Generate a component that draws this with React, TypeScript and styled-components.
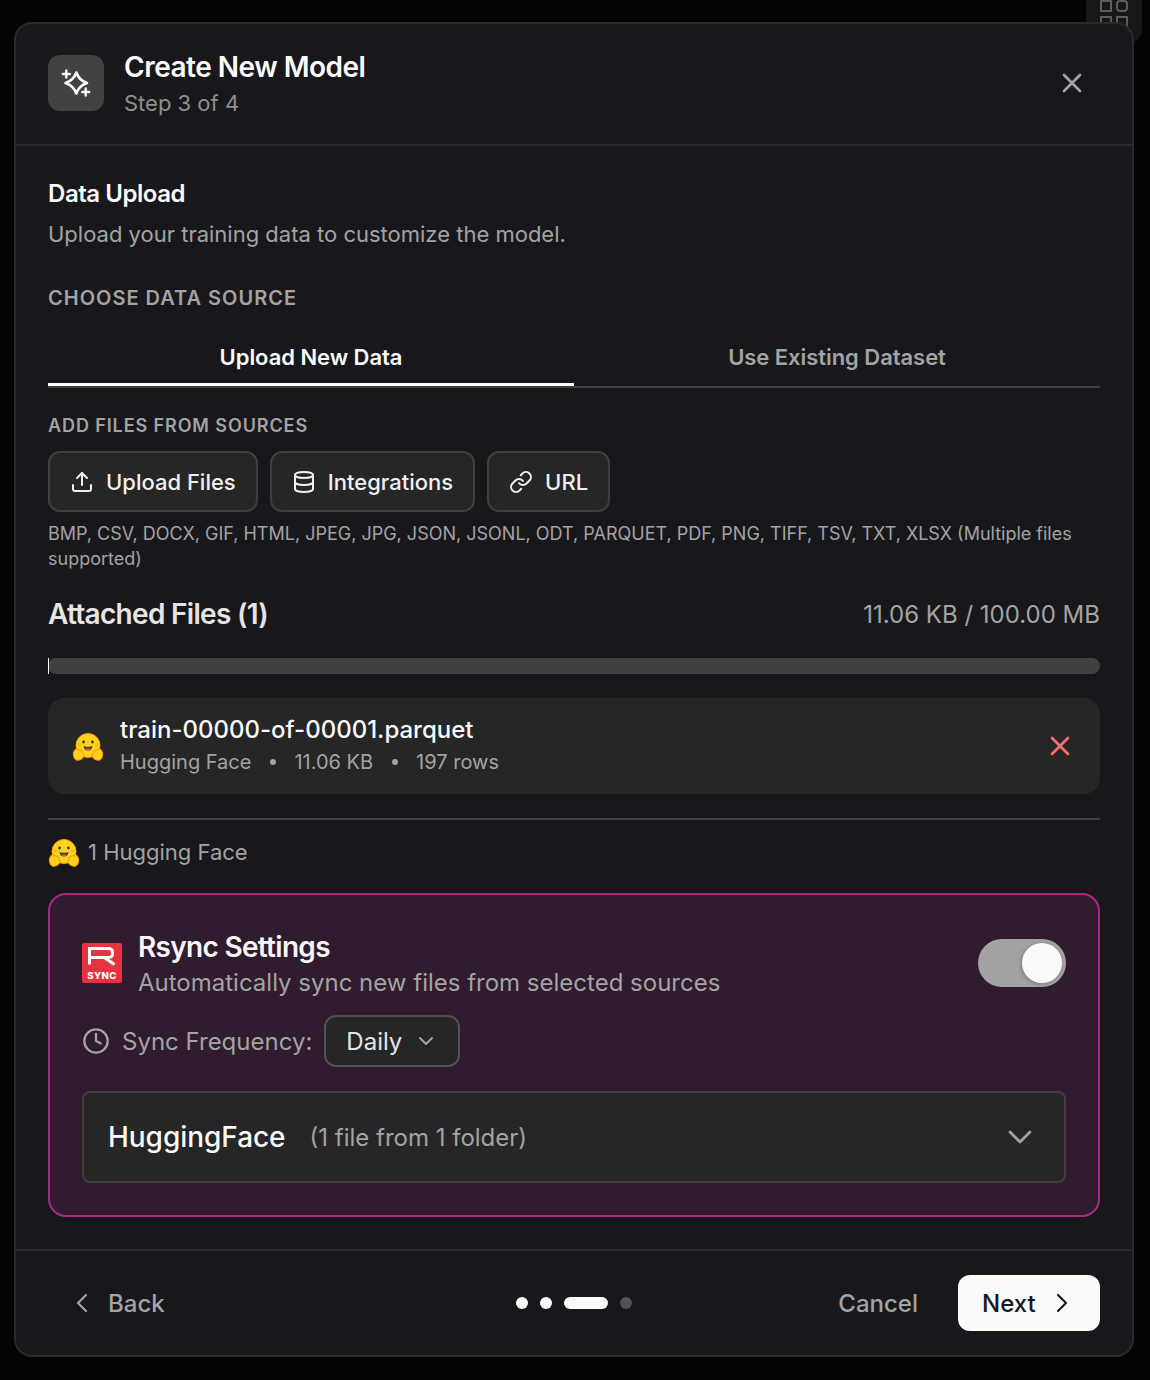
import React from "react";
import styled, { createGlobalStyle } from "styled-components";
import { X, Upload, Database, Link, Clock, ChevronDown, ChevronLeft, ChevronRight } from "lucide-react";

const GlobalStyle = createGlobalStyle`
  html, body {
    margin: 0;
    padding: 0;
    background: #040404;
    font-family: Inter, "Liberation Sans", sans-serif;
  }
`;

const Page = styled.div`
  position: relative;
  width: 1150px;
  height: 1380px;
  padding: 22px 16px 0 14px;
  box-sizing: border-box;
  overflow: hidden;
`;

const BackdropTile = styled.div`
  position: absolute;
  top: -14px;
  right: 8px;
  width: 56px;
  height: 56px;
  border-radius: 12px;
  background: #171717;
  color: #5c5c5c;
  display: flex;
  align-items: center;
  justify-content: center;
`;

const Modal = styled.div`
  position: relative;
  width: 1120px;
  height: 1335px;
  box-sizing: border-box;
  display: flex;
  flex-direction: column;
  background: #18181c;
  border: 2px solid #2a2a2c;
  border-radius: 18px;
`;

const Header = styled.header`
  height: 122px;
  box-sizing: border-box;
  flex-shrink: 0;
  display: flex;
  align-items: center;
  gap: 20px;
  padding: 0 32px 2px;
  border-bottom: 2px solid #2a2a2c;
`;

const HeaderIcon = styled.div`
  width: 56px;
  height: 56px;
  border-radius: 12px;
  background: #424242;
  display: flex;
  align-items: center;
  justify-content: center;
  color: #fafafa;
`;

const HeaderText = styled.div`
  flex: 1;
  display: flex;
  flex-direction: column;
  gap: 2px;
  margin-top: 2px;
`;

const Title = styled.div`
  font-size: 28px;
  line-height: 36px;
  font-weight: 600;
  letter-spacing: -0.5px;
  color: #fafafa;
`;

const Subtitle = styled.div`
  font-size: 22px;
  line-height: 32px;
  color: #8f8f8f;
`;

const CloseButton = styled.div`
  color: #a3a3a3;
  display: flex;
  margin-right: 12px;
`;

const Body = styled.main`
  flex: 1;
  padding: 32px 32px 0;
  display: flex;
  flex-direction: column;
`;

const SectionTitle = styled.div`
  font-size: 24px;
  line-height: 32px;
  font-weight: 600;
  letter-spacing: -0.45px;
  color: #fafafa;
`;

const SectionText = styled.div`
  margin-top: 8px;
  font-size: 22px;
  line-height: 32px;
  color: #a3a3a3;
`;

const OverLabel = styled.div<{ $size: number; $top: number; $spacing: number }>`
  margin-top: ${(p) => p.$top}px;
  font-size: ${(p) => p.$size}px;
  line-height: 26px;
  font-weight: 600;
  letter-spacing: ${(p) => p.$spacing}px;
  color: #a3a3a3;
`;

const Tabs = styled.div`
  display: flex;
  margin-top: 21px;
  border-bottom: 2px solid #404040;
`;

const Tab = styled.div<{ $active?: boolean }>`
  flex: 1;
  height: 54px;
  box-sizing: border-box;
  display: flex;
  align-items: center;
  justify-content: center;
  padding-bottom: 1px;
  border-bottom: 3px solid ${(p) => (p.$active ? "#fafafa" : "transparent")};
  font-size: 22px;
  font-weight: 600;
  letter-spacing: -0.05px;
  color: ${(p) => (p.$active ? "#fafafa" : "#a3a3a3")};
`;

const SourceRow = styled.div`
  display: flex;
  gap: 12px;
  margin-top: 12px;
`;

const SourceButton = styled.div`
  height: 61px;
  box-sizing: border-box;
  display: flex;
  align-items: center;
  gap: 12px;
  padding: 0 20px;
  border: 2px solid #404040;
  border-radius: 12px;
  background: #262626;
  font-size: 22px;
  font-weight: 500;
  color: #f0f0f0;
`;

const HelpText = styled.div`
  margin-top: 9px;
  font-size: 18px;
  line-height: 25px;
  color: #a3a3a3;
`;

const AttachedRow = styled.div`
  margin-top: 25px;
  display: flex;
  align-items: center;
  justify-content: space-between;
`;

const AttachedTitle = styled.div`
  font-size: 28px;
  line-height: 36px;
  font-weight: 600;
  letter-spacing: -0.7px;
  color: #e5e5e5;
`;

const AttachedSize = styled.div`
  font-size: 24px;
  color: #a3a3a3;
`;

const Progress = styled.div`
  margin-top: 26px;
  height: 16px;
  border-radius: 8px;
  background: #404040;
`;

const ProgressFill = styled.div`
  height: 100%;
  background: #fafafa;
`;

const FileCard = styled.div`
  margin-top: 24px;
  height: 96px;
  box-sizing: border-box;
  display: flex;
  align-items: center;
  gap: 16px;
  padding: 0 24px;
  border-radius: 16px;
  background: #262626;
`;

const FileInfo = styled.div`
  flex: 1;
  display: flex;
  flex-direction: column;
`;

const FileName = styled.div`
  font-size: 24px;
  line-height: 32px;
  font-weight: 500;
  color: #fafafa;
`;

const FileMeta = styled.div`
  display: flex;
  align-items: center;
  gap: 18.5px;
  font-size: 20px;
  line-height: 32px;
  color: #a3a3a3;
`;

const MetaDot = styled.span`
  width: 6px;
  height: 6px;
  border-radius: 50%;
  background: #a3a3a3;
`;

const RemoveButton = styled.div`
  display: flex;
  color: #f87171;
`;

const Divider = styled.div`
  margin-top: 24px;
  height: 2px;
  background: #404040;
`;

const SourceCount = styled.div`
  margin-top: 16px;
  display: flex;
  align-items: center;
  gap: 8px;
  font-size: 22px;
  line-height: 32px;
  color: #a3a3a3;
`;

const RsyncPanel = styled.section`
  margin-top: 25px;
  height: 324px;
  box-sizing: border-box;
  padding: 44px 32px 0;
  border: 2px solid #a62a82;
  border-radius: 18px;
  background: #301b2f;
  display: flex;
  flex-direction: column;
`;

const RsyncHead = styled.div`
  display: flex;
  align-items: center;
  gap: 16px;
  height: 48px;
`;

const RsyncText = styled.div`
  flex: 1;
  display: flex;
  flex-direction: column;
  padding-top: 3px;
`;

const RsyncTitle = styled.div`
  font-size: 28px;
  line-height: 36px;
  font-weight: 600;
  letter-spacing: -0.7px;
  color: #f5f5f5;
`;

const RsyncSub = styled.div`
  font-size: 24px;
  line-height: 35px;
  color: #a3a3a3;
`;

const Toggle = styled.div`
  width: 88px;
  height: 48px;
  box-sizing: border-box;
  padding: 4px;
  border-radius: 24px;
  background: #a3a3a3;
  display: flex;
  justify-content: flex-end;
`;

const ToggleKnob = styled.div`
  width: 40px;
  height: 40px;
  border-radius: 50%;
  background: #fafafa;
  box-shadow: -1px 1px 4px rgba(0, 0, 0, 0.25);
`;

const FrequencyRow = styled.div`
  margin-top: 28px;
  display: flex;
  align-items: center;
  gap: 12px;
  font-size: 24px;
  color: #a3a3a3;
`;

const FrequencySelect = styled.div`
  height: 52px;
  box-sizing: border-box;
  display: flex;
  align-items: center;
  gap: 12px;
  padding: 0 20px;
  border: 2px solid #525252;
  border-radius: 12px;
  background: #262626;
  color: #e5e5e5;
`;

const FrequencyChevron = styled(ChevronDown)`
  color: #a3a3a3;
`;

const FolderRow = styled.div`
  margin-top: 24px;
  height: 92px;
  box-sizing: border-box;
  display: flex;
  align-items: center;
  padding: 0 24px;
  border: 2px solid #404040;
  border-radius: 8px;
  background: #262626;
`;

const FolderName = styled.div`
  font-size: 28px;
  font-weight: 500;
  letter-spacing: -0.05px;
  color: #fafafa;
`;

const FolderCount = styled.div`
  flex: 1;
  margin-left: 24px;
  font-size: 24px;
  color: #a3a3a3;
`;

const Footer = styled.footer`
  height: 106px;
  flex-shrink: 0;
  box-sizing: border-box;
  display: grid;
  grid-template-columns: 1fr auto 1fr;
  align-items: center;
  padding: 0 32px;
  border-top: 2px solid #2a2a2c;
`;

const BackButton = styled.div`
  display: flex;
  align-items: center;
  gap: 10px;
  margin-left: 18px;
  font-size: 24px;
  font-weight: 500;
  color: #a3a3a3;
`;

const Dots = styled.div`
  display: flex;
  gap: 12px;
  align-items: center;
`;

const Dot = styled.span<{ $state: "done" | "current" | "todo" }>`
  width: ${(p) => (p.$state === "current" ? "44px" : "12px")};
  height: 12px;
  border-radius: 6px;
  background: ${(p) => (p.$state === "todo" ? "#525252" : "#fafafa")};
`;

const FooterActions = styled.div`
  display: flex;
  align-items: center;
  justify-content: flex-end;
  gap: 40px;
`;

const CancelButton = styled.div`
  font-size: 24px;
  font-weight: 500;
  color: #a3a3a3;
`;

const NextButton = styled.div`
  height: 56px;
  width: 142px;
  box-sizing: border-box;
  display: flex;
  align-items: center;
  gap: 10px;
  padding-left: 24px;
  border-radius: 12px;
  background: #fafaf8;
  font-size: 24px;
  font-weight: 500;
  color: #18181c;
`;

const SparkIcon = () => (
  <svg width="32" height="32" viewBox="0 0 32 32" fill="none" stroke="currentColor" strokeWidth="2.6" strokeLinecap="round" strokeLinejoin="round">
    <path d="M16.300 5.500Q18.900 13.200 27 16Q18.900 18.800 16.300 26.500Q13.700 18.800 5.500 16Q13.700 13.200 16.300 5.500Z" />
    <path d="M6.300 3.500v7M2.800 7h7" strokeWidth="2.400" />
    <path d="M25.700 21.500v7M22.200 25h7" strokeWidth="2.400" />
  </svg>
);

const GridIcon = () => (
  <svg width="30" height="30" viewBox="0 0 30 30" fill="none" stroke="currentColor" strokeWidth="2">
    <rect x="2" y="2" width="10" height="10" />
    <rect x="18" y="2" width="10" height="10" rx="3" />
    <rect x="2" y="18" width="10" height="10" />
    <rect x="18" y="18" width="10" height="10" />
  </svg>
);

const HuggingIcon = ({ size }: { size: number }) => (
  <svg width={size} height={size} viewBox="0 0 32 32">
    <circle cx="16" cy="15.500" r="12" fill="#ffd21e" stroke="#ff9d0b" strokeWidth="1" />
    <circle cx="11.600" cy="12" r="1.400" fill="#3a3b45" />
    <circle cx="20.400" cy="12" r="1.400" fill="#3a3b45" />
    <circle cx="7.600" cy="15" r="1.400" fill="#ff9d0b" opacity="0.6" />
    <circle cx="24.400" cy="15" r="1.400" fill="#ff9d0b" opacity="0.6" />
    <path d="M11.500 16c1.400.9 7.600.9 9 0-.4 3-2.200 4.600-4.500 4.600s-4.100-1.600-4.500-4.600z" fill="#3a3b45" />
    <path d="M13.400 19c1.500-1.100 3.700-1.100 5.200 0-1.400 1.900-3.800 1.900-5.200 0z" fill="#f3524f" />
    <g transform="translate(-0.500 2)">
      <path d="M2 23.500c-.6-2.600 1-5.200 2.700-6.500 1-.7 1.900.2 1.700 1.200 1.200-1 2.500-.7 2.900.5 1.300-.2 2.500 1.300 2.200 2.600 1.100 1.200 1.100 3-.1 4.400-1.500 1.900-3.900 2.800-6 2.400C3.600 27.700 2.500 25.800 2 23.500z" fill="#ffd21e" stroke="#ff9d0b" strokeWidth="1.100" />
    </g>
    <g transform="translate(0.500 2)">
      <path d="M30 23.500c.6-2.600-1-5.200-2.700-6.500-1-.7-1.900.2-1.700 1.200-1.200-1-2.500-.7-2.900.5-1.300-.2-2.500 1.300-2.200 2.600-1.100 1.200-1.100 3 .1 4.400 1.500 1.900 3.900 2.800 6 2.400 1.800-.4 2.900-2.300 3.400-4.600z" fill="#ffd21e" stroke="#ff9d0b" strokeWidth="1.100" />
    </g>
  </svg>
);

const RsyncLogo = () => (
  <svg width="40" height="40" viewBox="0 0 40 40">
    <rect width="40" height="40" rx="2" fill="#e5333f" />
    <path d="M7.500 21.500V5.500H26.500c2.500 0 4 1.500 4 4v.8c0 2.500-1.500 4.200-4 4.200H7.500" fill="none" stroke="#fff" strokeWidth="3" />
    <path d="M23 15l9.500 6.500" fill="none" stroke="#fff" strokeWidth="3" />
    <text x="20" y="36" textAnchor="middle" fontSize="9.600" fontWeight="800" letterSpacing="0.4" fill="#fff" fontFamily="Inter, sans-serif">SYNC</text>
  </svg>
);

export default function App() {
  return (
    <Page>
      <GlobalStyle />
      <BackdropTile>
        <GridIcon />
      </BackdropTile>
      <Modal>
        <Header>
          <HeaderIcon>
            <SparkIcon />
          </HeaderIcon>
          <HeaderText>
            <Title>Create New Model</Title>
            <Subtitle>Step 3 of 4</Subtitle>
          </HeaderText>
          <CloseButton>
            <X size={32} strokeWidth={2} />
          </CloseButton>
        </Header>

        <Body>
          <SectionTitle>Data Upload</SectionTitle>
          <SectionText>Upload your training data to customize the model.</SectionText>
          <OverLabel $size={20} $top={35} $spacing={1}>CHOOSE DATA SOURCE</OverLabel>
          <Tabs>
            <Tab $active>Upload New Data</Tab>
            <Tab>Use Existing Dataset</Tab>
          </Tabs>
          <OverLabel $size={18} $top={25} $spacing={0.9}>ADD FILES FROM SOURCES</OverLabel>
          <SourceRow>
            <SourceButton>
              <Upload size={24} strokeWidth={2} />
              Upload Files
            </SourceButton>
            <SourceButton>
              <Database size={24} strokeWidth={2} />
              Integrations
            </SourceButton>
            <SourceButton>
              <Link size={24} strokeWidth={2} />
              URL
            </SourceButton>
          </SourceRow>
          <HelpText>
            BMP, CSV, DOCX, GIF, HTML, JPEG, JPG, JSON, JSONL, ODT, PARQUET, PDF, PNG, TIFF, TSV, TXT, XLSX (Multiple files supported)
          </HelpText>
          <AttachedRow>
            <AttachedTitle>Attached Files (1)</AttachedTitle>
            <AttachedSize>11.06 KB / 100.00 MB</AttachedSize>
          </AttachedRow>
          <Progress>
            <ProgressFill style={{ width: `${(11.06 / 102400) * 100 + 0.1}%` }} />
          </Progress>
          <FileCard>
            <HuggingIcon size={32} />
            <FileInfo>
              <FileName>train-00000-of-00001.parquet</FileName>
              <FileMeta>
                Hugging Face
                <MetaDot />
                11.06 KB
                <MetaDot />
                197 rows
              </FileMeta>
            </FileInfo>
            <RemoveButton>
              <X size={32} strokeWidth={2} />
            </RemoveButton>
          </FileCard>
          <Divider />
          <SourceCount>
            <HuggingIcon size={32} />
            1 Hugging Face
          </SourceCount>
          <RsyncPanel>
            <RsyncHead>
              <RsyncLogo />
              <RsyncText>
                <RsyncTitle>Rsync Settings</RsyncTitle>
                <RsyncSub>Automatically sync new files from selected sources</RsyncSub>
              </RsyncText>
              <Toggle>
                <ToggleKnob />
              </Toggle>
            </RsyncHead>
            <FrequencyRow>
              <Clock size={28} strokeWidth={2} />
              Sync Frequency:
              <FrequencySelect>
                Daily
                <FrequencyChevron size={24} strokeWidth={2} />
              </FrequencySelect>
            </FrequencyRow>
            <FolderRow>
              <FolderName>HuggingFace</FolderName>
              <FolderCount>(1 file from 1 folder)</FolderCount>
              <ChevronDown size={40} strokeWidth={1.6} color="#a3a3a3" />
            </FolderRow>
          </RsyncPanel>
        </Body>

        <Footer>
          <BackButton>
            <ChevronLeft size={32} strokeWidth={1.6} />
            Back
          </BackButton>
          <Dots>
            <Dot $state="done" />
            <Dot $state="done" />
            <Dot $state="current" />
            <Dot $state="todo" />
          </Dots>
          <FooterActions>
            <CancelButton>Cancel</CancelButton>
            <NextButton>
              Next
              <ChevronRight size={32} strokeWidth={1.6} />
            </NextButton>
          </FooterActions>
        </Footer>
      </Modal>
    </Page>
  );
}
